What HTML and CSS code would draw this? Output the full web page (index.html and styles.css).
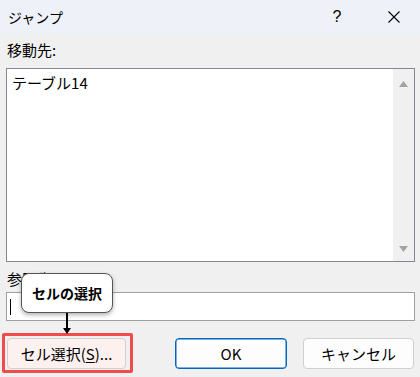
FILE: index.html
```html
<!DOCTYPE html>
<html lang="ja">
<head>
<meta charset="utf-8">
<link rel="stylesheet" href="styles.css">
</head>
<body>
<div class="dialog">
  <div class="titlebar">
    <span class="title">ジャンプ</span>
    <span class="help">?</span>
    <span class="close">
      <svg width="12" height="12" viewBox="0 0 12 12"><path d="M0.5 0.5L11.5 11.5M11.5 0.5L0.5 11.5" stroke="#000" stroke-width="1.1" fill="none"/></svg>
    </span>
  </div>
  <div class="content">
    <div class="label first">移動先:</div>
    <div class="listbox">
      <div class="items"><div class="item">テーブル14</div></div>
      <div class="scrollbar">
        <svg width="9" height="6" viewBox="0 0 9 6"><path d="M4.5 0L9 6H0Z" fill="#a3a3a3"/></svg>
        <svg width="9" height="6" viewBox="0 0 9 6"><path d="M0 0H9L4.5 6Z" fill="#a3a3a3"/></svg>
      </div>
    </div>
    <div class="label second">参照先(R):</div>
    <div class="textbox"><span class="caret"></span></div>
    <div class="buttons">
      <div class="highlight">
        <button class="btn select">セル選択(<u>S</u>)...</button>
      </div>
      <button class="btn ok">OK</button>
      <button class="btn cancel">キャンセル</button>
    </div>
  </div>
  <div class="tooltip">セルの選択</div>
  <div class="pointer">
    <svg width="10" height="22" viewBox="0 0 10 22"><path d="M5 0V16" stroke="#000" stroke-width="2"/><path d="M1 15H9L5 21Z" fill="#000"/></svg>
  </div>
</div>
</body>
</html>
```
FILE: styles.css
```css
html, body {
  margin: 0;
  padding: 0;
}
body {
  width: 420px;
  height: 377px;
  overflow: hidden;
  background: #f0f0f0;
  font-family: "Noto Sans CJK JP", "Noto Sans", sans-serif;
  color: #000;
}
.dialog {
  position: relative;
  width: 420px;
  height: 377px;
}
.titlebar {
  height: 34px;
  background: #eef2f8;
  display: flex;
  align-items: center;
}
.title {
  padding-left: 8px;
  font-size: 14px;
  line-height: 20px;
  flex: 1;
}
.help {
  width: 46px;
  margin-right: 8px;
  text-align: center;
  font-family: "Liberation Sans", sans-serif;
  font-size: 16px;
  line-height: 20px;
}
.close {
  width: 52px;
  display: flex;
  justify-content: center;
}
.content {
  padding: 0 5px 0 6px;
}
.label {
  font-size: 15px;
  line-height: 20px;
  padding-left: 1px;
}
.label.first {
  padding-top: 6px;
  margin-bottom: 8px;
}
.label.second {
  margin-top: 7px;
  margin-bottom: 3px;
}
.listbox {
  height: 192px;
  border: 1px solid #828790;
  background: #fff;
  display: flex;
}
.items {
  flex: 1;
  padding: 4px 5px;
}
.item {
  font-size: 15px;
  line-height: 20px;
}
.scrollbar {
  width: 21px;
  background: #f0f0f0;
  display: flex;
  flex-direction: column;
  align-items: center;
  justify-content: space-between;
  padding: 12px 0 9px;
  box-sizing: border-box;
}
.scrollbar svg {
  display: block;
}
.textbox {
  height: 27px;
  border: 1px solid #a0a0a0;
  background: #fff;
  display: flex;
  align-items: center;
  padding-left: 3px;
}
.caret {
  width: 1px;
  height: 16px;
  background: #000;
}
.buttons {
  display: flex;
  margin-top: 17px;
  padding-left: 1px;
}
.highlight {
  position: relative;
  margin-right: 49px;
}
.highlight::after {
  content: "";
  position: absolute;
  left: -5px;
  top: -5px;
  right: -7px;
  bottom: -4px;
  border: 3px solid #f24b4b;
  border-radius: 2px;
  box-sizing: border-box;
  pointer-events: none;
}
.btn {
  height: 31px;
  box-sizing: border-box;
  border-radius: 4px;
  font-family: "Noto Sans CJK JP", "Noto Sans", sans-serif;
  font-size: 15px;
  line-height: 20px;
  color: #000;
  padding: 0;
  display: block;
}
.btn u {
  text-underline-offset: 2px;
}
.select {
  width: 119px;
  background: #fdf1f0;
  border: 1px solid #d5cfcf;
}
.ok {
  width: 112px;
  background: #fdfdfd;
  border: 1px solid #0067c0;
  box-shadow: inset 0 0 0 0.5px #0067c0;
  margin-right: 16px;
}
.cancel {
  width: 111px;
  background: #fdfdfd;
  border: 1px solid #d0d0d0;
}
.tooltip {
  position: absolute;
  left: 21px;
  top: 273px;
  width: 92px;
  height: 40px;
  box-sizing: border-box;
  background: #fff;
  border: 1px solid #555;
  border-radius: 8px;
  box-shadow: 0 2px 4px rgba(0, 0, 0, 0.3);
  font-size: 14px;
  font-weight: bold;
  line-height: 38px;
  text-align: center;
}
.pointer {
  position: absolute;
  left: 62px;
  top: 313px;
  line-height: 0;
}
```
